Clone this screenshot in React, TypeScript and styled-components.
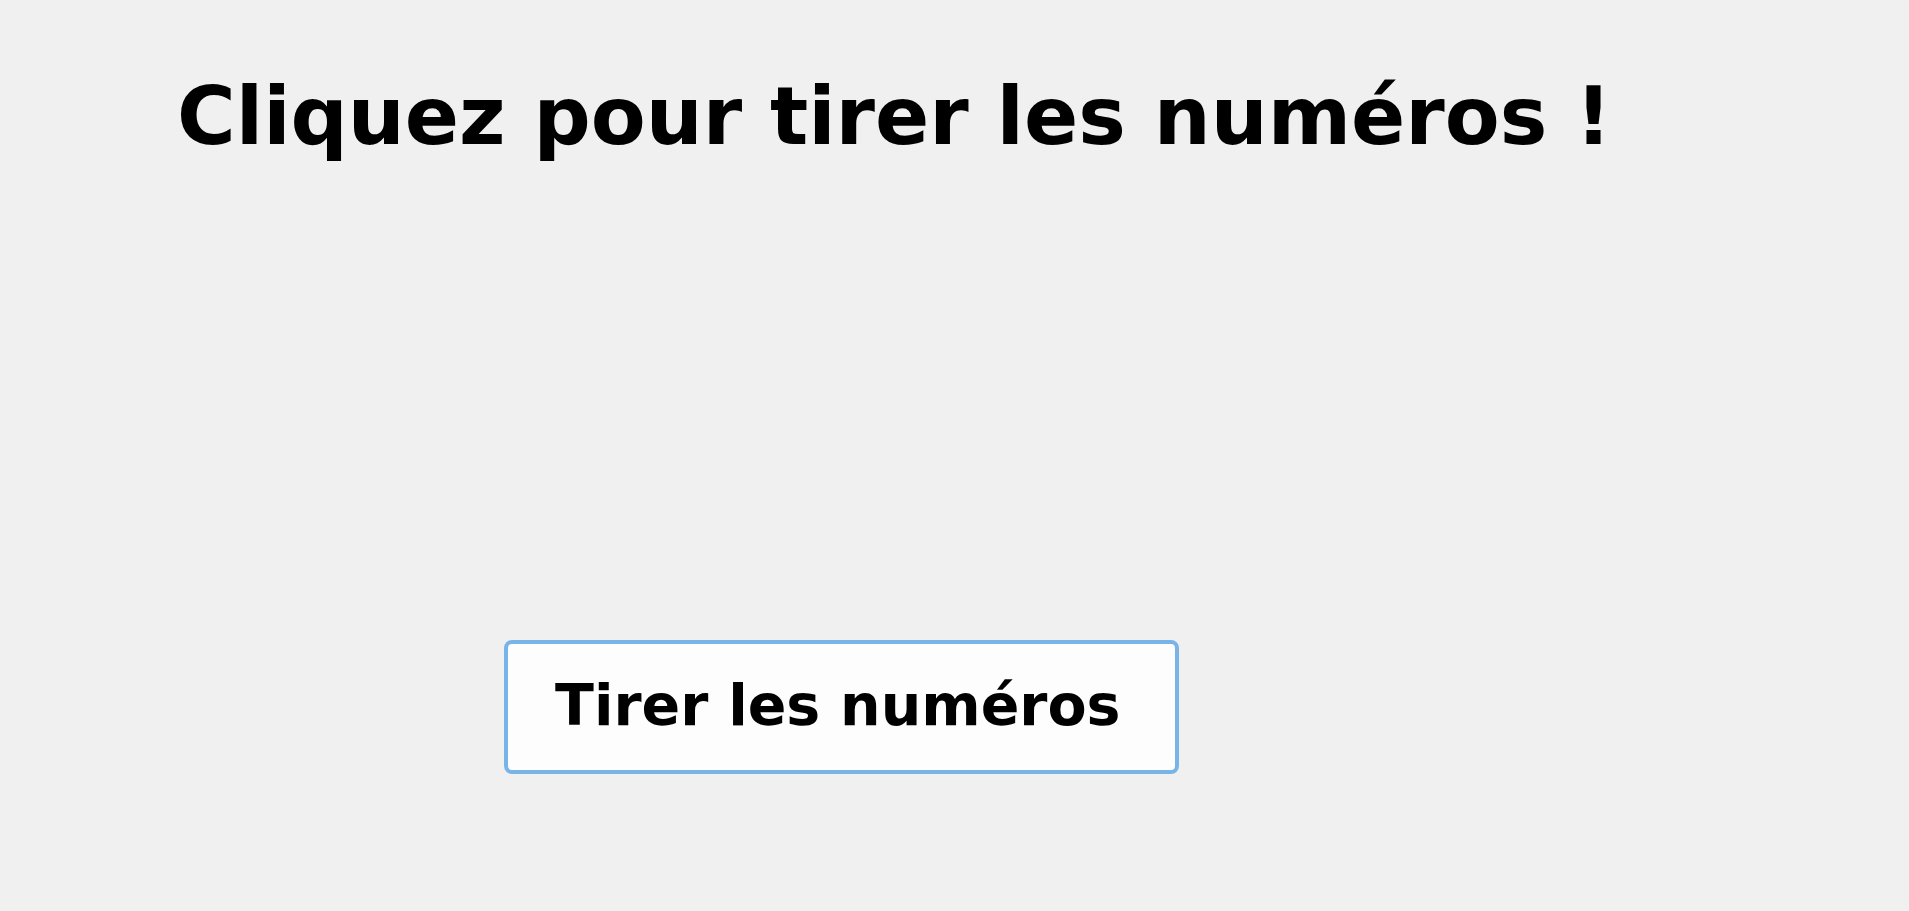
import React, { FunctionComponent } from 'react';
import styled, { createGlobalStyle } from 'styled-components';

const GlobalStyle = createGlobalStyle`
  html, body {
    margin: 0;
    padding: 0;
    background: #f0f0f0;
  }

  body {
    font-family: 'DejaVu Sans', 'Liberation Sans', Arial, sans-serif;
    color: #000;
  }
`;

export const App: FunctionComponent = () => {
  const numbers: number[] = [];

  return (
    <>
      <GlobalStyle />
      <Page>
        <Heading>Cliquez pour tirer les numéros !</Heading>
        <Results>
          {numbers.map((n) => (
            <Ball key={n}>{n}</Ball>
          ))}
        </Results>
        <DrawButton type="button">Tirer les numéros</DrawButton>
      </Page>
    </>
  );
};

const Page = styled.main`
  min-height: 911px;
  box-sizing: border-box;
  padding: 69px 0 0 177px;
  display: flex;
  flex-direction: column;
  align-items: flex-start;
`;

const Heading = styled.h1`
  margin: 0;
  font-size: 80px;
  line-height: 96px;
  font-weight: 700;
  white-space: nowrap;
`;

// where the drawn numbers would show up
const Results = styled.div`
  display: flex;
  gap: 24px;
  height: 475px;
  align-items: center;
`;

const Ball = styled.span`
  font-size: 48px;
  font-weight: 700;
`;

const DrawButton = styled.button`
  box-sizing: border-box;
  margin-left: 327px;
  width: 675px;
  height: 134px;
  padding: 0 0 4px 47px;
  display: flex;
  align-items: center;
  background: #fdfdfd;
  border: 4px solid #78b4e8;
  border-radius: 8px;
  font-family: 'DejaVu Sans', 'Liberation Sans', Arial, sans-serif;
  font-size: 57px;
  line-height: 1;
  font-weight: 700;
  color: #000;
  cursor: pointer;
`;

export default App;
